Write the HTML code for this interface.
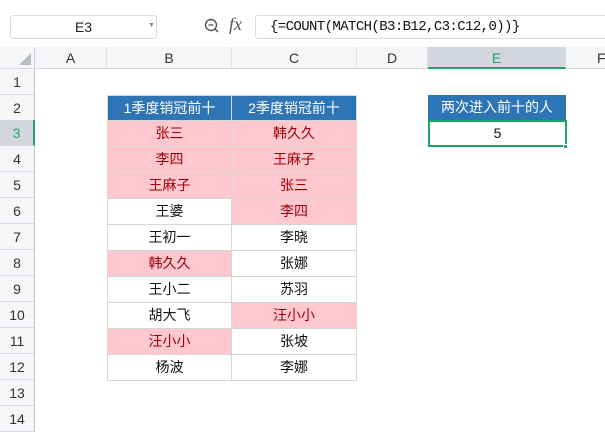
<!DOCTYPE html>
<html><head><meta charset="utf-8"><style>
*{margin:0;padding:0;box-sizing:border-box}
body{width:605px;height:420px;overflow:hidden;background:#fff;font-family:"Liberation Sans","Noto Sans CJK SC",sans-serif;position:relative}
.a{position:absolute}
.top{left:0;top:0;width:605px;height:48px;background:#fff;border-bottom:1px solid #e0e0e0}
.rh{left:0;width:35px;background:#f5f6f8;border-right:1px solid #c8ccd6;border-bottom:1px solid #d5d8e0;font-size:14px;color:#333;text-align:center}
.ch{top:47px;height:22px;background:#f5f6f8;border-bottom:1px solid #d5d8e0;border-right:1px solid #dde0e6;font-size:14px;color:#333;text-align:center;line-height:22px}
.c{height:27px;line-height:25px;text-align:center;font-size:14px;border:1px solid #d6d6d6;background:#fff;color:#111}
.p{background:#ffc7ce;color:#9c0006}
.h{background:#2e75b6;color:#fff;border-color:#d6d6d6}
</style></head><body>
<div class="a top"></div>
<div class="a" style="left:10px;top:15px;width:147px;height:24px;border:1px solid #dcdcdc;border-radius:3px;font-size:14px;line-height:22px;text-align:center;color:#222">E3</div>
<div class="a" style="left:148px;top:22px;font-size:7px;color:#888">▼</div>
<svg class="a" style="left:204px;top:18px" width="16" height="18" viewBox="0 0 16 18"><circle cx="7" cy="7" r="5.5" fill="none" stroke="#555" stroke-width="1.4"/><line x1="4.5" y1="7" x2="9.5" y2="7" stroke="#555" stroke-width="1.3"/><line x1="11" y1="11" x2="14" y2="14" stroke="#555" stroke-width="1.5"/></svg>
<div class="a" style="left:229px;top:14px;font-family:'Liberation Serif',serif;font-style:italic;font-size:18px;color:#555">fx</div>
<div class="a" style="left:255px;top:15px;width:360px;height:24px;border:1px solid #dcdcdc;border-radius:3px;font-family:'Liberation Mono',monospace;font-size:14px;line-height:22px;padding-left:14px;color:#111;letter-spacing:-0.6px">{=COUNT(MATCH(B3:B12,C3:C12,0))}</div>
<div class="a" style="left:0;top:47px;width:35px;height:22px;background:#f5f6f8;border-right:1px solid #c8ccd6;border-bottom:1px solid #d5d8e0"></div>
<svg class="a" style="left:19px;top:53px" width="12" height="12"><polygon points="12,0 12,12 0,12" fill="#b8bcc4"/></svg>
<div class="a ch" style="left:35px;width:72px">A</div>
<div class="a ch" style="left:107px;width:125px">B</div>
<div class="a ch" style="left:232px;width:125px">C</div>
<div class="a ch" style="left:357px;width:71px">D</div>
<div class="a ch" style="left:428px;width:138px;background:#d3d6dc;color:#21a366;border-bottom:2px solid #21a366">E</div>
<div class="a ch" style="left:566px;width:80px;text-align:left;padding-left:31px">F</div>
<div class="a rh" style="top:69px;height:26px;line-height:26px">1</div>
<div class="a rh" style="top:95px;height:26px;line-height:26px">2</div>
<div class="a rh" style="top:120px;height:26px;line-height:26px;background:#d3d6dc;color:#21a366;border-right:2px solid #21a366">3</div>
<div class="a rh" style="top:146px;height:26px;line-height:26px">4</div>
<div class="a rh" style="top:172px;height:26px;line-height:26px">5</div>
<div class="a rh" style="top:198px;height:26px;line-height:26px">6</div>
<div class="a rh" style="top:224px;height:26px;line-height:26px">7</div>
<div class="a rh" style="top:250px;height:26px;line-height:26px">8</div>
<div class="a rh" style="top:276px;height:26px;line-height:26px">9</div>
<div class="a rh" style="top:302px;height:26px;line-height:26px">10</div>
<div class="a rh" style="top:328px;height:26px;line-height:26px">11</div>
<div class="a rh" style="top:354px;height:26px;line-height:26px">12</div>
<div class="a rh" style="top:380px;height:26px;line-height:26px">13</div>
<div class="a rh" style="top:406px;height:26px;line-height:26px">14</div>

<div class="a c h" style="left:107px;top:95px;width:125px">1季度销冠前十</div>
<div class="a c h" style="left:231px;top:95px;width:126px">2季度销冠前十</div>
<div class="a c p" style="left:107px;top:120px;width:125px">张三</div>
<div class="a c p" style="left:231px;top:120px;width:126px">韩久久</div>
<div class="a c p" style="left:107px;top:146px;width:125px">李四</div>
<div class="a c p" style="left:231px;top:146px;width:126px">王麻子</div>
<div class="a c p" style="left:107px;top:172px;width:125px">王麻子</div>
<div class="a c p" style="left:231px;top:172px;width:126px">张三</div>
<div class="a c" style="left:107px;top:198px;width:125px">王婆</div>
<div class="a c p" style="left:231px;top:198px;width:126px">李四</div>
<div class="a c" style="left:107px;top:224px;width:125px">王初一</div>
<div class="a c" style="left:231px;top:224px;width:126px">李晓</div>
<div class="a c p" style="left:107px;top:250px;width:125px">韩久久</div>
<div class="a c" style="left:231px;top:250px;width:126px">张娜</div>
<div class="a c" style="left:107px;top:276px;width:125px">王小二</div>
<div class="a c" style="left:231px;top:276px;width:126px">苏羽</div>
<div class="a c" style="left:107px;top:302px;width:125px">胡大飞</div>
<div class="a c p" style="left:231px;top:302px;width:126px">汪小小</div>
<div class="a c p" style="left:107px;top:328px;width:125px">汪小小</div>
<div class="a c" style="left:231px;top:328px;width:126px">张坡</div>
<div class="a c" style="left:107px;top:354px;width:125px">杨波</div>
<div class="a c" style="left:231px;top:354px;width:126px">李娜</div>

<div class="a c h" style="left:428px;top:95px;width:138px;border:none">两次进入前十的人</div>
<div class="a" style="left:428px;top:120px;width:139px;height:27px;border:2px solid #21a366;font-size:14px;text-align:center;line-height:23px;color:#111">5</div>
<div class="a" style="left:563px;top:144px;width:5px;height:5px;background:#21a366;border:1px solid #fff"></div>
</body></html>
